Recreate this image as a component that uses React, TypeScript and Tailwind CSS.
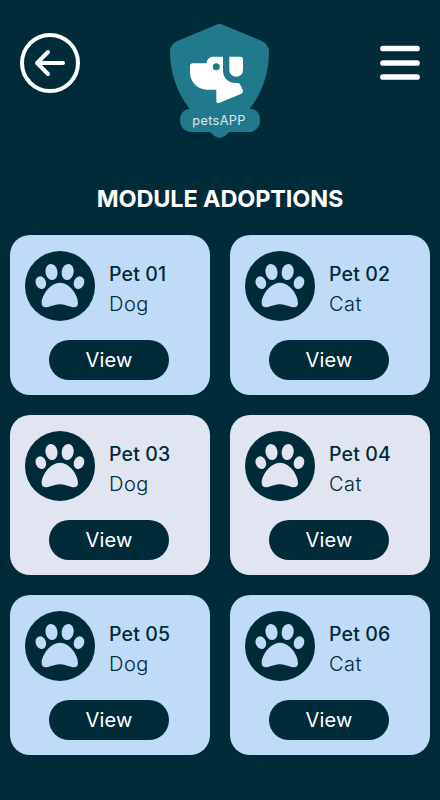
type Pet = { name: string; kind: string };

const pets: Pet[] = [
  { name: "Pet 01", kind: "Dog" },
  { name: "Pet 02", kind: "Cat" },
  { name: "Pet 03", kind: "Dog" },
  { name: "Pet 04", kind: "Cat" },
  { name: "Pet 05", kind: "Dog" },
  { name: "Pet 06", kind: "Cat" },
];

function Logo() {
  return (
    <svg viewBox="0 0 360 390" className="ml-20 h-[130px] w-[120px] shrink-0">
      <path
        fill="#217a8c"
        d="M166 31Q179 23 192 31L304 77Q327 88 327 111C327 172 306 237 269 281C290 281 300 297 300 316C300 337 285 351 265 351H215C204 351 201 357 198 361Q179 377 160 361C157 357 154 351 143 351H95C75 351 60 337 60 316C60 297 70 283 89 281C52 237 30 172 30 111Q30 88 53 77Z"
      />
      <path
        fill="#fff"
        fillRule="evenodd"
        d="M98 145H140C140 133 149 125 161 125H189V167C189 188 205 204 227 204H234Q238 204 240 208L248 224Q251 232 244 236L179 263Q169 267 169 257V224H142C112 224 90 201 90 172V153Q90 145 98 145ZM169 145A10.500 10.500 0 1 0 169 166A10.500 10.500 0 1 0 169 145Z"
      />
      <path fill="#fff" d="M208 125H241Q249 125 249 133V165A20.500 20.500 0 0 1 208 165Z" />
      <text
        x="97"
        y="330"
        fontSize="38"
        textLength="159"
        fill="#e1e4f0"
        className="font-['Inter',sans-serif]"
      >
        petsAPP
      </text>
    </svg>
  );
}

function Paw() {
  return (
    <svg viewBox="15 18 210 210" className="size-[70px] shrink-0 rounded-full bg-[#002b38]">
      <g fill="currentColor">
        <ellipse cx="62.500" cy="113" rx="15.500" ry="19.500" transform="rotate(-22 62.500 113)" />
        <ellipse cx="94.500" cy="81" rx="18" ry="24.500" transform="rotate(-10 94.500 81)" />
        <ellipse cx="143" cy="81" rx="18" ry="24.500" transform="rotate(10 143 81)" />
        <ellipse cx="177" cy="113" rx="15.500" ry="19.500" transform="rotate(22 177 113)" />
        <path d="M120 113C148 113 174 149 174 174C174 185 167 188 155 186C141 183 133 178 120 178C107 178 98 183 84 186C72 188 65 185 65 174C65 149 92 113 120 113Z" />
      </g>
    </svg>
  );
}

function PetCard({ pet, tone }: { pet: Pet; tone: string }) {
  return (
    <article className={`flex h-40 flex-col rounded-[20px] pt-4 pl-[15px] ${tone}`}>
      <div className="flex">
        <Paw />
        <div className="ml-3.5 pt-2 text-[#002b38]">
          <h2 className="h-[30px] text-[19.500px] leading-[30px] font-medium tracking-[0.15px]">{pet.name}</h2>
          <p className="h-[30px] text-[20px] leading-[30px] font-light tracking-[0.5px]">{pet.kind}</p>
        </div>
      </div>
      <button className="mt-[19px] ml-6 h-10 w-[120px] rounded-full bg-[#002b38] text-[20px] leading-10 tracking-[0.2px] text-white">
        View
      </button>
    </article>
  );
}

export default function App() {
  return (
    <main className="h-[800px] w-[440px] overflow-hidden bg-[#002b38] font-['Inter',sans-serif]">
      <header className="flex items-start px-5 pt-[15px]">
        <button aria-label="Back" className="mt-[18px] size-[60px] shrink-0">
          <svg viewBox="0 0 60 60" fill="none" stroke="#fff" strokeWidth="4" strokeLinecap="round" strokeLinejoin="round">
            <circle cx="30" cy="30" r="28" />
            <path d="M43 30H17.500M28 19L17 30L28 41" />
          </svg>
        </button>
        <Logo />
        <button aria-label="Menu" className="mt-[30px] ml-[100px] h-9 w-10 shrink-0">
          <svg viewBox="0 0 40 36" stroke="#fff" strokeWidth="5.700" strokeLinecap="round">
            <path d="M3 3.500H37M3 18H37M3 32H37" />
          </svg>
        </button>
      </header>
      <h1 className="mt-9 h-[54px] text-center text-[23.500px] leading-9 font-bold tracking-[-0.14px] text-white">
        MODULE ADOPTIONS
      </h1>
      <section className="grid grid-cols-2 gap-5 px-2.5">
        {pets.map((pet, i) => (
          <PetCard
            key={pet.name}
            pet={pet}
            tone={Math.floor(i / 2) % 2 === 0 ? "bg-[#c0dbf8] text-[#c0dbf8]" : "bg-[#e1e5f1] text-[#e1e5f1]"}
          />
        ))}
      </section>
    </main>
  );
}
